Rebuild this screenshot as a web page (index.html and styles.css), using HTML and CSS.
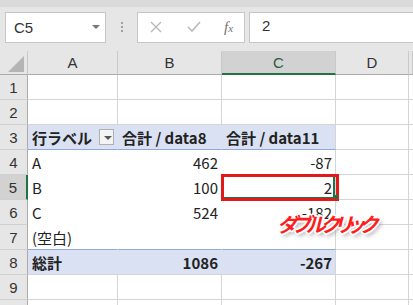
FILE: index.html
```html
<!DOCTYPE html>
<html lang="ja">
<head>
    <meta charset="UTF-8">
    <title>ピボットテーブル</title>
    <link rel="stylesheet" href="styles.css">
</head>
<body>

<div class="app">
    <div class="formula-bar">
        <div class="name-box">
            <span>C5</span>
            <span class="nb-arrow"></span>
        </div>
        <div class="grip"><i></i><i></i><i></i></div>
        <div class="fx-buttons">
            <svg class="fx-icon" width="12" height="12" viewBox="0 0 12 12"><path d="M1 1 L11 11 M11 1 L1 11" stroke="#b9b9b9" stroke-width="1.4" fill="none"/></svg>
            <svg class="fx-icon" width="14" height="12" viewBox="0 0 14 12"><path d="M1 6 L5 10 L13 1" stroke="#b9b9b9" stroke-width="1.6" fill="none"/></svg>
            <span class="fx-label">f<sub>x</sub></span>
        </div>
        <div class="formula-input">2</div>
    </div>

    <div class="sheet">
        <div class="row head">
            <div class="corner"><span></span></div>
            <div class="ch">A</div>
            <div class="ch">B</div>
            <div class="ch active">C</div>
            <div class="ch">D</div>
            <div class="ch"></div>
        </div>
        <div class="row">
            <div class="rh">1</div>
            <div class="c"></div><div class="c"></div><div class="c"></div><div class="c"></div><div class="c"></div>
        </div>
        <div class="row">
            <div class="rh">2</div>
            <div class="c"></div><div class="c"></div><div class="c"></div><div class="c"></div><div class="c"></div>
        </div>
        <div class="row">
            <div class="rh">3</div>
            <div class="c pv-head">行ラベル<span class="filter-btn"></span></div>
            <div class="c pv-head">合計 / data8</div>
            <div class="c pv-head last">合計 / data11</div>
            <div class="c"></div><div class="c"></div>
        </div>
        <div class="row">
            <div class="rh">4</div>
            <div class="c pv">A</div>
            <div class="c pv num">462</div>
            <div class="c pv num last">-87</div>
            <div class="c"></div><div class="c"></div>
        </div>
        <div class="row">
            <div class="rh sel">5</div>
            <div class="c pv">B</div>
            <div class="c pv num">100</div>
            <div class="c pv num last current">2</div>
            <div class="c"></div><div class="c"></div>
        </div>
        <div class="row">
            <div class="rh">6</div>
            <div class="c pv">C</div>
            <div class="c pv num">524</div>
            <div class="c pv num last">-182</div>
            <div class="c"></div><div class="c"></div>
        </div>
        <div class="row">
            <div class="rh">7</div>
            <div class="c pv pv-end">(空白)</div>
            <div class="c pv pv-end"></div>
            <div class="c pv pv-end last"></div>
            <div class="c"></div><div class="c"></div>
        </div>
        <div class="row">
            <div class="rh">8</div>
            <div class="c pv-total">総計</div>
            <div class="c pv-total num">1086</div>
            <div class="c pv-total num last">-267</div>
            <div class="c"></div><div class="c"></div>
        </div>
        <div class="row">
            <div class="rh">9</div>
            <div class="c"></div><div class="c"></div><div class="c"></div><div class="c"></div><div class="c"></div>
        </div>
        <div class="row">
            <div class="rh"></div>
            <div class="c"></div><div class="c"></div><div class="c"></div><div class="c"></div><div class="c"></div>
        </div>
    </div>

    <!-- annotation drawn over the sheet -->
    <div class="mark-box"></div>
    <div class="fill-handle"></div>
    <div class="callout">ダブルクリック</div>
</div>

</body>
</html>
```

FILE: styles.css
```css
body {
    margin: 0;
    background-color: #ffffff;
    font-family: "Noto Sans CJK JP", "Liberation Sans", sans-serif;
    color: #222222;
}
.app {
    position: relative;
    width: 413px;
    height: 305px;
    overflow: hidden;
}

/* formula bar */
.formula-bar {
    display: flex;
    align-items: center;
    height: 44px;
    padding: 0 0 0 5px;
    border-top: 7px solid #dadada;
    background-color: #e6e6e6;
}
.name-box {
    display: flex;
    align-items: center;
    justify-content: space-between;
    box-sizing: border-box;
    width: 101px;
    height: 31px;
    margin-top: -4px;
    padding: 0 5px 0 8px;
    background-color: #ffffff;
    border: 1px solid #c6c6c6;
    font-family: "Liberation Sans", sans-serif;
    font-size: 15px;
    color: #333333;
}
.nb-arrow {
    width: 0;
    height: 0;
    border-left: 4px solid transparent;
    border-right: 4px solid transparent;
    border-top: 4px solid #777777;
}
.grip {
    display: flex;
    flex-direction: column;
    gap: 2px;
    margin: -4px 14px 0 15px;
}
.grip i {
    display: block;
    width: 2px;
    height: 2px;
    background-color: #a0a0a0;
}
.fx-buttons {
    display: flex;
    align-items: center;
    box-sizing: border-box;
    width: 108px;
    height: 31px;
    margin-top: -4px;
    padding-left: 12px;
    gap: 25px;
    background-color: #ffffff;
    border: 1px solid #c6c6c6;
}
.fx-label {
    margin-left: -2px;
    font-family: "Liberation Serif", serif;
    font-style: italic;
    font-size: 15px;
    color: #707070;
}
.fx-label sub {
    font-size: 11px;
    vertical-align: 0;
}
.formula-input {
    flex: 1;
    box-sizing: border-box;
    height: 31px;
    margin: -4px 0 0 4px;
    padding: 4px 0 0 12px;
    background-color: #ffffff;
    border: 1px solid #c6c6c6;
    border-right: none;
    font-family: "Liberation Sans", sans-serif;
    font-size: 15px;
    color: #333333;
}

/* sheet grid */
.row {
    display: grid;
    grid-template-columns: 28px 90px 104px 114px 73px 1fr;
    height: 25px;
}
.row > div {
    box-sizing: border-box;
    display: flex;
    align-items: center;
    font-size: 15px;
    white-space: nowrap;
    overflow: hidden;
}
.row.head {
    height: 24px;
}
.corner {
    background-color: #e6e6e6;
    border-right: 1px solid #c8c8c8;
    border-bottom: 1px solid #ababab;
}
.corner span {
    width: 0;
    height: 0;
    margin: 3px 0 0 8px;
    border-left: 16px solid transparent;
    border-bottom: 16px solid #b4b4b4;
}
.ch {
    justify-content: center;
    background-color: #e6e6e6;
    border-right: 1px solid #c8c8c8;
    border-bottom: 1px solid #ababab;
    font-family: "Liberation Sans", sans-serif;
    color: #333333;
}
.ch.active {
    background-color: #d2d2d2;
    border-bottom: 2px solid #217346;
    color: #2b5a40;
}
.rh {
    justify-content: center;
    background-color: #e6e6e6;
    border-right: 1px solid #ababab;
    border-bottom: 1px solid #d0d0d0;
    font-family: "Liberation Sans", sans-serif;
    color: #333333;
}
.rh.sel {
    background-color: #d2d2d2;
    border-right: 2px solid #217346;
}
.c {
    padding: 0 3px 0 4px;
    border-right: 1px solid #d4d4d4;
    border-bottom: 1px solid #d4d4d4;
}
.num {
    justify-content: flex-end;
}

/* pivot table */
.pv-head {
    background-color: #d9e1f2;
    border-color: transparent;
    border-bottom: 1px solid #8ea9db;
    font-weight: bold;
}
.pv {
    border-color: transparent;
}
.pv-end {
    border-bottom: 1px solid #8ea9db;
}
.pv-total {
    background-color: #d9e1f2;
    border-right-color: transparent;
    font-weight: bold;
}
.c.last {
    border-right: 1px solid #d4d4d4;
}
.pv-head.last {
    border-right-color: #d4d4d4;
}
.filter-btn {
    position: relative;
    box-sizing: border-box;
    width: 17px;
    height: 16px;
    margin-left: 7px;
    background-color: #f3f3f3;
    border: 1px solid #b0b0b0;
}
.filter-btn::after {
    content: "";
    position: absolute;
    left: 4px;
    top: 6px;
    border-left: 4px solid transparent;
    border-right: 4px solid transparent;
    border-top: 4px solid #555555;
}
.current {
    box-shadow: inset 0 0 0 2px #217346;
}

/* annotation */
.mark-box {
    position: absolute;
    left: 221px;
    top: 174px;
    width: 118px;
    height: 27px;
    box-sizing: border-box;
    border: 3px solid #e31818;
}
.fill-handle {
    position: absolute;
    left: 334px;
    top: 195px;
    width: 4px;
    height: 4px;
    background-color: #217346;
}
.callout {
    position: absolute;
    left: 277px;
    top: 210px;
    font-size: 20px;
    line-height: 28px;
    font-weight: bold;
    font-style: italic;
    font-feature-settings: "palt";
    letter-spacing: -4.5px;
    color: #ff1c1c;
    text-shadow: 1px 1px 0 #fff, -1px -1px 0 #fff, 1px -1px 0 #fff, -1px 1px 0 #fff,
        2px 0 0 #fff, -2px 0 0 #fff, 0 2px 0 #fff, 0 -2px 0 #fff,
        2px 3px 4px #9a9a9a;
}
```
